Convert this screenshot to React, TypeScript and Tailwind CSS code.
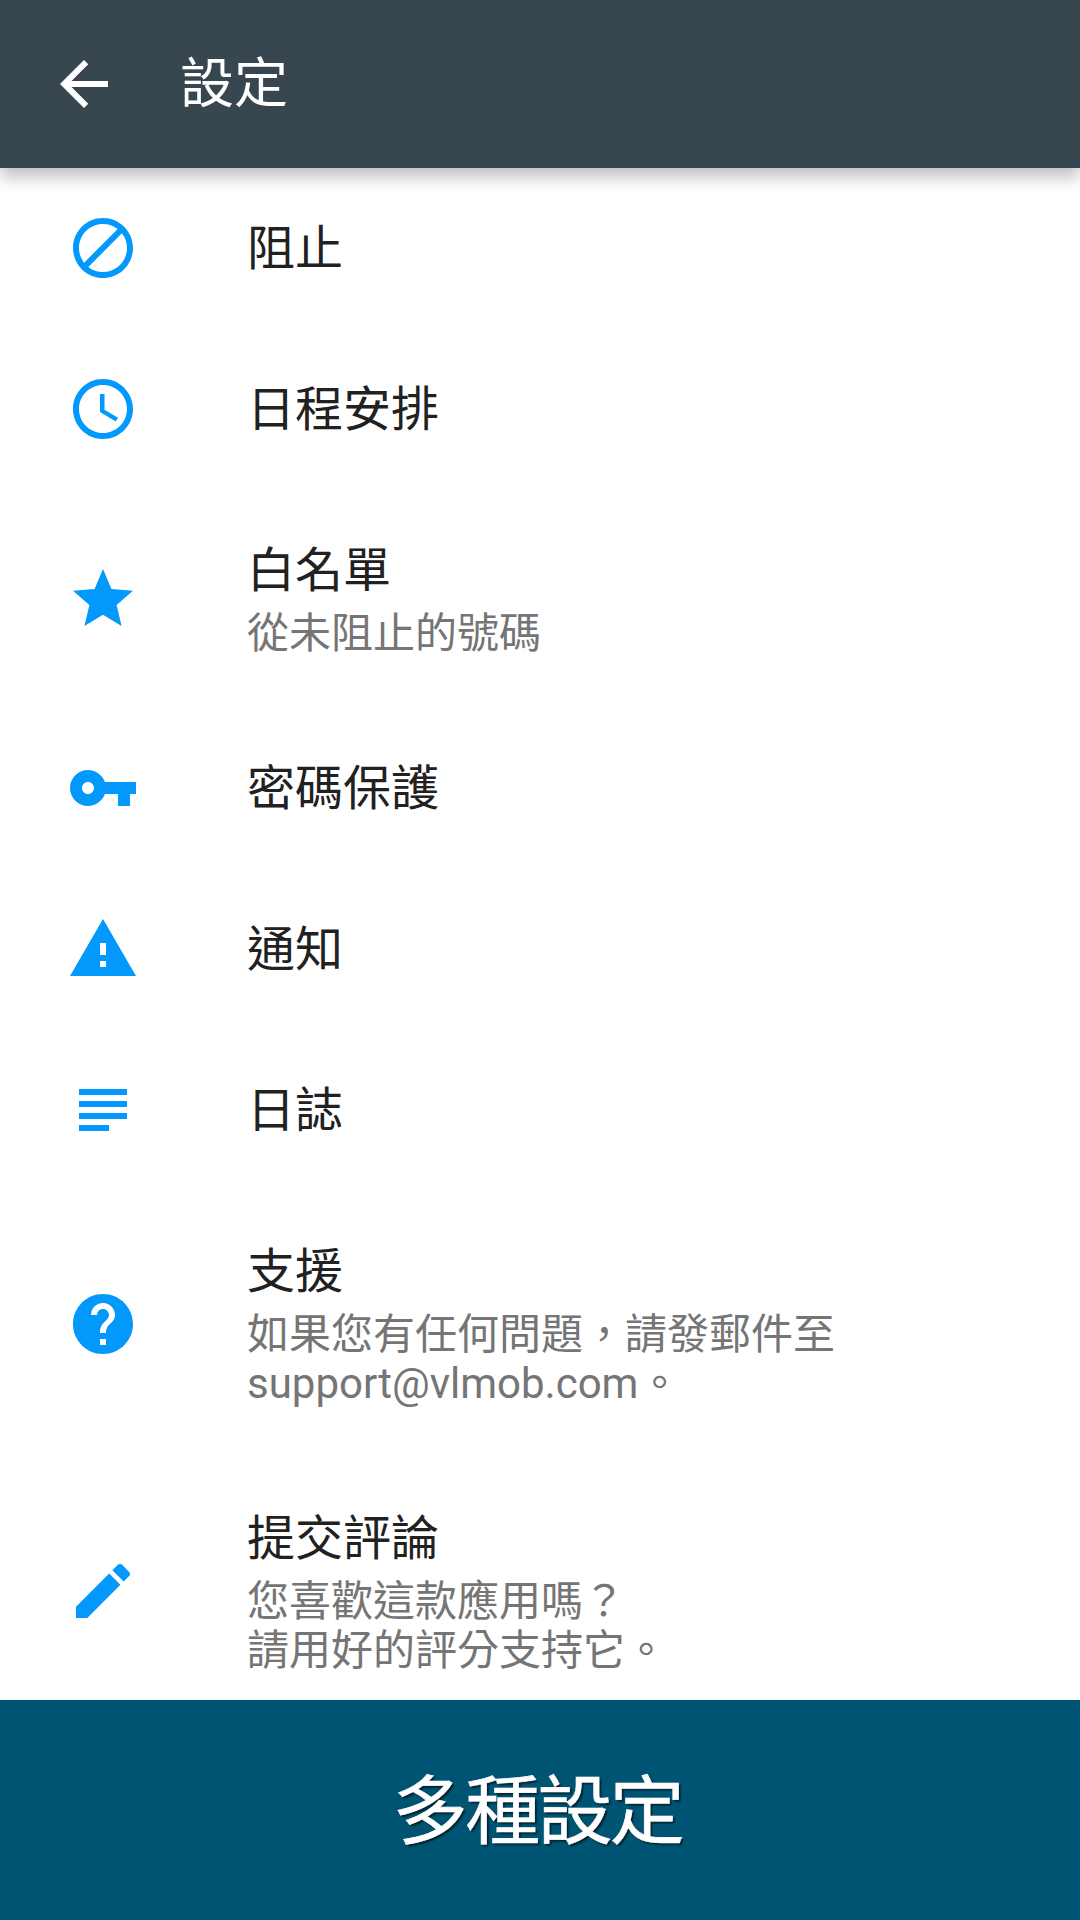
import * as React from "react";

interface Item {
  title: string;
  summary?: string[];
  icon: string;
}

const ITEMS: Item[] = [
  {
    title: "阻止",
    icon: "M12 2C6.48 2 2 6.48 2 12s4.48 10 10 10 10-4.48 10-10S17.52 2 12 2zM4 12c0-4.42 3.58-8 8-8 1.85 0 3.55.63 4.9 1.69L5.69 16.9C4.63 15.55 4 13.85 4 12zm8 8c-1.85 0-3.55-.63-4.9-1.69L18.31 7.1C19.37 8.45 20 10.15 20 12c0 4.42-3.58 8-8 8z",
  },
  {
    title: "日程安排",
    icon: "M11.99 2C6.47 2 2 6.48 2 12s4.47 10 9.99 10C17.52 22 22 17.52 22 12S17.52 2 11.99 2zM12 20c-4.42 0-8-3.58-8-8s3.58-8 8-8 8 3.58 8 8-3.58 8-8 8zm.5-13H11v6l5.25 3.15.75-1.23-4.5-2.67z",
  },
  {
    title: "白名單",
    summary: ["從未阻止的號碼"],
    icon: "M12 17.27L18.18 21l-1.64-7.03L22 9.24l-7.19-.61L12 2 9.19 8.63 2 9.24l5.46 4.73L5.82 21z",
  },
  {
    title: "密碼保護",
    icon: "M12.65 10C11.83 7.67 9.61 6 7 6c-3.31 0-6 2.69-6 6s2.69 6 6 6c2.61 0 4.83-1.67 5.65-4H17v4h4v-4h2v-4H12.65zM7 14c-1.1 0-2-.9-2-2s.9-2 2-2 2 .9 2 2-.9 2-2 2z",
  },
  { title: "通知", icon: "M1 21h22L12 2 1 21zm12-3h-2v-2h2v2zm0-4h-2v-4h2v4z" },
  { title: "日誌", icon: "M14 17H4v2h10v-2zm6-8H4v2h16V9zM4 15h16v-2H4v2zM4 5v2h16V5H4z" },
  {
    title: "支援",
    summary: ["如果您有任何問題\uff0c請發郵件至", "support@vlmob.com。"],
    icon: "M12 2C6.48 2 2 6.48 2 12s4.48 10 10 10 10-4.48 10-10S17.52 2 12 2zm1 17h-2v-2h2v2zm2.07-7.75l-.9.92C13.45 12.9 13 13.5 13 15h-2v-.5c0-1.1.45-2.1 1.17-2.83l1.24-1.26c.37-.36.59-.86.59-1.41 0-1.1-.9-2-2-2s-2 .9-2 2H8c0-2.21 1.79-4 4-4s4 1.79 4 4c0 .88-.36 1.68-.93 2.25z",
  },
  {
    title: "提交評論",
    summary: ["您喜歡這款應用嗎\uff1f", "請用好的評分支持它。"],
    icon: "M3 17.25V21h3.75L17.81 9.94l-3.75-3.75L3 17.25zM20.71 7.04c.39-.39.39-1.02 0-1.41l-2.34-2.34c-.39-.39-1.02-.39-1.41 0l-1.83 1.83 3.75 3.75 1.83-1.83z",
  },
];

function Icon({ d }: { d: string }) {
  return (
    <svg viewBox="0 0 24 24" fill="currentColor" className="block h-[72px] w-[72px] shrink-0">
      <path d={d} />
    </svg>
  );
}

function Row({ item }: { item: Item }) {
  return (
    <li className="flex shrink-0 items-center py-12 pl-[67px]">
      <span className="-mt-1 -mb-[3px] text-[#0398fc]">
        <Icon d={item.icon} />
      </span>
      <div className="ml-[108px]">
        <div className="text-[48px] leading-[65px] text-[#212121]">{item.title}</div>
        {item.summary && (
          <div className="pt-1.5 pb-0.5 text-[42px] leading-[49px] whitespace-nowrap text-[#757575]">
            {item.summary.map((line) => (
              <div key={line}>{line}</div>
            ))}
          </div>
        )}
      </div>
    </li>
  );
}

export default function App() {
  return (
    <div
      lang="zh-Hant"
      className="flex h-[1920px] w-[1080px] flex-col overflow-hidden bg-white font-['Roboto','Noto_Sans_CJK_TC',sans-serif]"
    >
      <header className="relative z-10 flex h-[168px] shrink-0 items-center bg-[#38474f] pl-12 text-white shadow-[0_9px_16px_rgba(0,0,0,0.26)]">
        <Icon d="M20 11H7.83l5.59-5.59L12 4l-8 8 8 8 1.41-1.41L7.83 13H20v-2z" />
        <h1 className="ml-[60px] pt-0.5 text-[54px] leading-[72px]">設定</h1>
      </header>

      <ul className="flex min-h-0 flex-1 flex-col overflow-hidden">
        {ITEMS.map((item) => (
          <Row key={item.title} item={item} />
        ))}
      </ul>

      <footer className="flex h-[220px] shrink-0 items-center justify-center bg-[#005473] pt-1 pr-[5px] text-[75px] tracking-[-2.7px] text-white [-webkit-text-stroke:0.6px_white] [text-shadow:2px_2px_2px_rgba(0,0,0,0.6)]">
        多種設定
      </footer>
    </div>
  );
}
